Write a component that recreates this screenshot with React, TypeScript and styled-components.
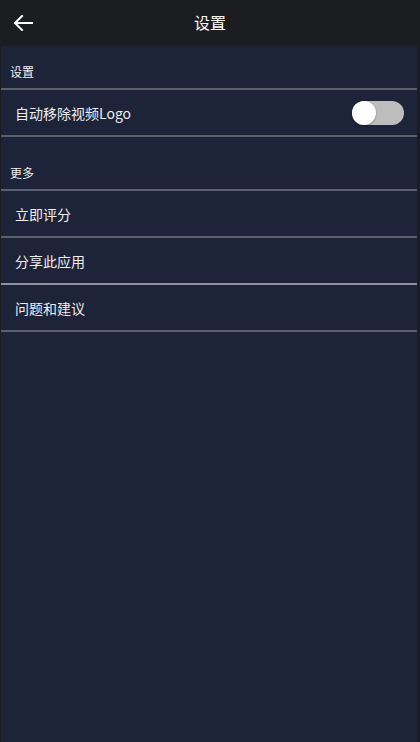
import React from "react";
import styled, { createGlobalStyle } from "styled-components";

const GlobalStyle = createGlobalStyle`
  html, body {
    margin: 0;
    padding: 0;
    background: #1b1d20;
    font-family: "Noto Sans CJK SC", "Roboto", sans-serif;
  }
`;

function Toggle({ on }: { on: boolean }) {
  return (
    <Track $on={on}>
      <Thumb $on={on} />
    </Track>
  );
}

function App() {
  return (
    <Screen>
      <GlobalStyle />
      <TopBar>
        <BackButton aria-label="back">
          <svg width="20" height="16" viewBox="0 0 20 16" fill="none">
            <path
              d="M19 8H2M9 1L2 8l7 7"
              stroke="#fff"
              strokeWidth="2"
              strokeLinecap="square"
            />
          </svg>
        </BackButton>
        <Title>设置</Title>
      </TopBar>

      <Body>
        <Section>
          <SectionLabel>设置</SectionLabel>
          <Row>
            <span>自动移除视频Logo</span>
            <Toggle on={false} />
          </Row>
        </Section>

        <Section>
          <SectionLabel>更多</SectionLabel>
          <Row>立即评分</Row>
          <Row $bright>分享此应用</Row>
          <Row>问题和建议</Row>
        </Section>
      </Body>
    </Screen>
  );
}

const Screen = styled.div`
  width: 420px;
  height: 742px;
  display: flex;
  flex-direction: column;
  background: #1b1d20;
`;

const TopBar = styled.header`
  position: relative;
  height: 46px;
  flex-shrink: 0;
  display: flex;
  align-items: center;
  justify-content: center;
  background: #1b1d20;
`;

const BackButton = styled.button`
  position: absolute;
  left: 13px;
  top: 15px;
  padding: 0;
  border: 0;
  background: none;
  display: flex;
`;

const Title = styled.h1`
  margin: 0 0 2px;
  color: #fff;
  font-size: 16px;
  font-weight: 400;
`;

const Body = styled.main`
  flex: 1;
  margin: 0 3px 0 1px;
  background: #1d2338;
  padding-top: 15px;
  display: flex;
  flex-direction: column;
  gap: 25px;
`;

const Section = styled.section`
  display: flex;
  flex-direction: column;
`;

const SectionLabel = styled.div`
  color: #f2f2f2;
  font-size: 12px;
  line-height: 16px;
  padding: 3px 9px 8px;
  border-bottom: 2px solid #5a606e;
`;

const Row = styled.div<{ $bright?: boolean }>`
  height: 45px;
  display: flex;
  align-items: center;
  justify-content: space-between;
  padding: 0 14px;
  color: #eeeeee;
  font-size: 14px;
  border-bottom: 2px solid ${({ $bright }) => ($bright ? "#8d929c" : "#5a606e")};
`;

const Track = styled.div<{ $on: boolean }>`
  position: relative;
  width: 52px;
  height: 24px;
  border-radius: 12px;
  background: ${({ $on }) => ($on ? "#4caf50" : "#bdbdbd")};
  margin-right: -1px;
`;

const Thumb = styled.div<{ $on: boolean }>`
  position: absolute;
  top: 0;
  left: ${({ $on }) => ($on ? "28px" : "0")};
  width: 24px;
  height: 24px;
  border-radius: 50%;
  background: #fff;
  box-shadow: 0 1px 2px rgba(0, 0, 0, 0.3);
`;

export default App;
